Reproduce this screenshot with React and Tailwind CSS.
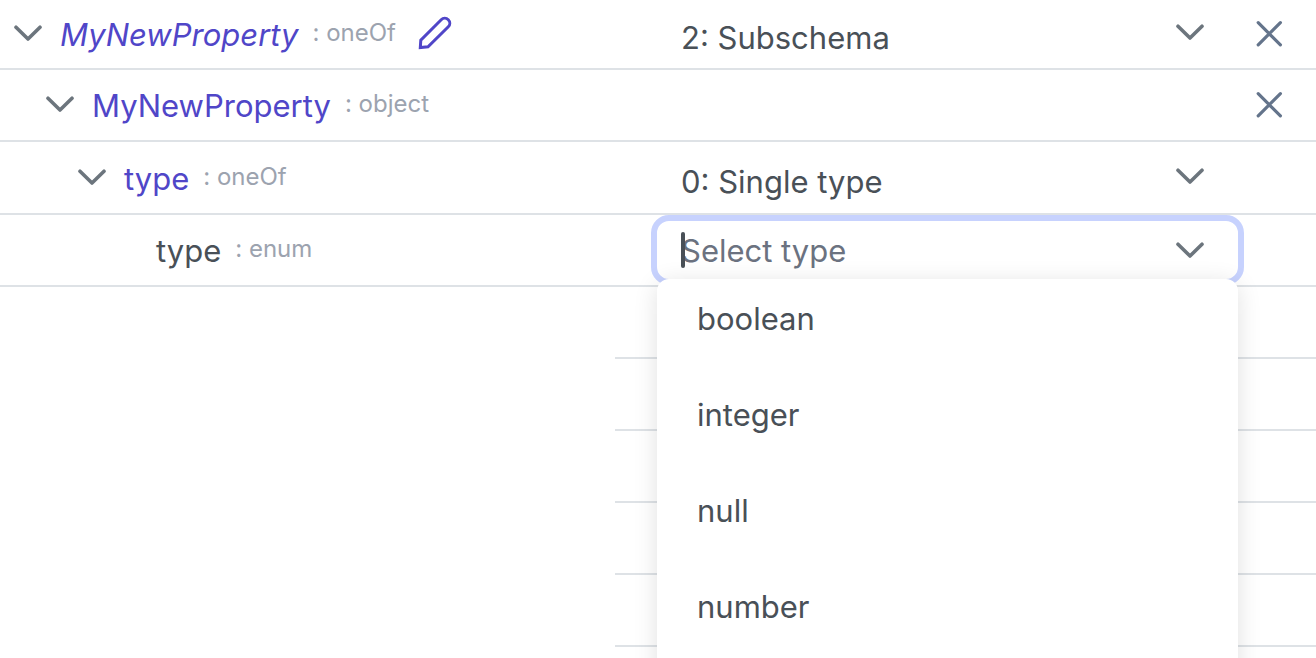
import React from 'react';

const rowGrid = 'grid grid-cols-[615fr_701fr]';

function Chevron() {
  return (
    <svg
      className="h-4 w-7 shrink-0"
      viewBox="0 0 28 16"
      fill="none"
      stroke="#6c757d"
      strokeWidth="3.6"
      strokeLinecap="round"
      strokeLinejoin="round"
      aria-hidden="true"
    >
      <path d="M2 2.2 14 14 26 2.2" />
    </svg>
  );
}

function Pencil() {
  return (
    <svg
      className="size-[34px]"
      viewBox="0 0 34 34"
      fill="none"
      stroke="#5046c8"
      strokeWidth="3"
      strokeLinejoin="miter"
      aria-hidden="true"
    >
      <path d="M2.3 31.5 2.8 24.2 23.2 3.7A5 5 0 0 1 30.3 10.8L10 30.8Z" />
    </svg>
  );
}

function RemoveButton() {
  return (
    <button type="button" aria-label="Remove property" className="flex w-[50px] items-center justify-center">
      <svg
        className="size-7"
        viewBox="0 0 28 28"
        fill="none"
        stroke="#64748b"
        strokeWidth="3.2"
        strokeLinecap="round"
        aria-hidden="true"
      >
        <path d="M3.2 2.6 25.4 24.8M25.4 2.6 3.2 24.8" />
      </svg>
    </button>
  );
}

function PropertyName({ name, type, indent, tone, expandable, editable }) {
  return (
    <div className={`flex items-center pt-0.5 ${indent}`}>
      {expandable && (
        <button type="button" aria-label={`Collapse ${name}`} className="mr-[18px] flex pb-1">
          <Chevron />
        </button>
      )}
      <span className={`text-[31px] leading-10 ${tone}`}>{name}</span>
      <span className="ml-3.5 pb-1 text-2xl leading-8 text-[#9ca3af]">: {type}</span>
      {editable && (
        <button type="button" aria-label={`Rename ${name}`} className="ml-[22px] flex pb-1">
          <Pencil />
        </button>
      )}
    </div>
  );
}

function SchemaSelect({ label, value }) {
  return (
    <div className="relative flex flex-1 items-center">
      <select
        aria-label={label}
        defaultValue={value}
        className="w-full appearance-none bg-transparent pt-2 pl-[30px] text-[31px] leading-10 text-[#495057] outline-none"
      >
        <option>{value}</option>
      </select>
      <span className="pointer-events-none absolute right-10 pb-1">
        <Chevron />
      </span>
    </div>
  );
}

const options = ['boolean', 'integer', 'null', 'number'];

function TypeCombobox() {
  return (
    <div className="relative flex flex-1 items-center rounded-[18px] border-6 border-[#c7d2fe] bg-white">
      <input
        type="text"
        role="combobox"
        aria-label="Type"
        aria-expanded="true"
        aria-controls="type-options"
        placeholder="Select type"
        className="w-full min-w-0 bg-transparent pt-0.5 pl-6 text-[31px] leading-10 text-[#495057] caret-transparent outline-none placeholder:text-[#6b7280]"
      />
      <span className="absolute left-6 h-9 w-1 rounded-sm bg-[#495057]" />
      <span className="pointer-events-none absolute right-[34px]">
        <Chevron />
      </span>
      <ul
        id="type-options"
        role="listbox"
        aria-label="Type options"
        className="absolute inset-x-0 top-full z-10 flex h-[440px] flex-col gap-4 rounded-xl bg-white shadow-[0_4px_24px_rgba(0,0,0,0.12)]"
      >
        {options.map((option) => (
          <li
            key={option}
            role="option"
            aria-selected="false"
            className="flex h-20 shrink-0 items-center px-10 text-[31px] leading-10 text-[#495057]"
          >
            {option}
          </li>
        ))}
      </ul>
    </div>
  );
}

function Row({ height, name, control, removable }) {
  return (
    <div className={`${rowGrid} ${height} border-b-2 border-[#dee2e6]`}>
      {name}
      <div className="flex pl-9">
        {control || <div className="flex-1" />}
        <div className="mr-[22px] flex w-[50px]">{removable && <RemoveButton />}</div>
      </div>
    </div>
  );
}

export default function App() {
  return (
    <main className="h-screen overflow-hidden bg-white font-['Inter',sans-serif]">
      <Row
        height="h-[70px]"
        name={
          <PropertyName
            name="MyNewProperty"
            type="oneOf"
            indent="pl-[14px]"
            tone="italic text-[#5046c8]"
            expandable
            editable
          />
        }
        control={<SchemaSelect label="Schema for MyNewProperty" value="2: Subschema" />}
        removable
      />
      <Row
        height="h-[72px]"
        name={
          <PropertyName name="MyNewProperty" type="object" indent="pl-[46px]" tone="text-[#5046c8]" expandable />
        }
        removable
      />
      <Row
        height="h-[73px]"
        name={<PropertyName name="type" type="oneOf" indent="pl-[78px]" tone="text-[#5046c8]" expandable />}
        control={<SchemaSelect label="Schema for type" value="0: Single type" />}
      />
      <Row
        height="h-[72px]"
        name={<PropertyName name="type" type="enum" indent="pl-[156px]" tone="text-[#495057]" />}
        control={<TypeCombobox />}
      />
      {[0, 1, 2, 3, 4].map((line) => (
        <div key={line} className={rowGrid}>
          <div className="col-start-2 h-[72px] border-b-2 border-[#dee2e6]" />
        </div>
      ))}
    </main>
  );
}
